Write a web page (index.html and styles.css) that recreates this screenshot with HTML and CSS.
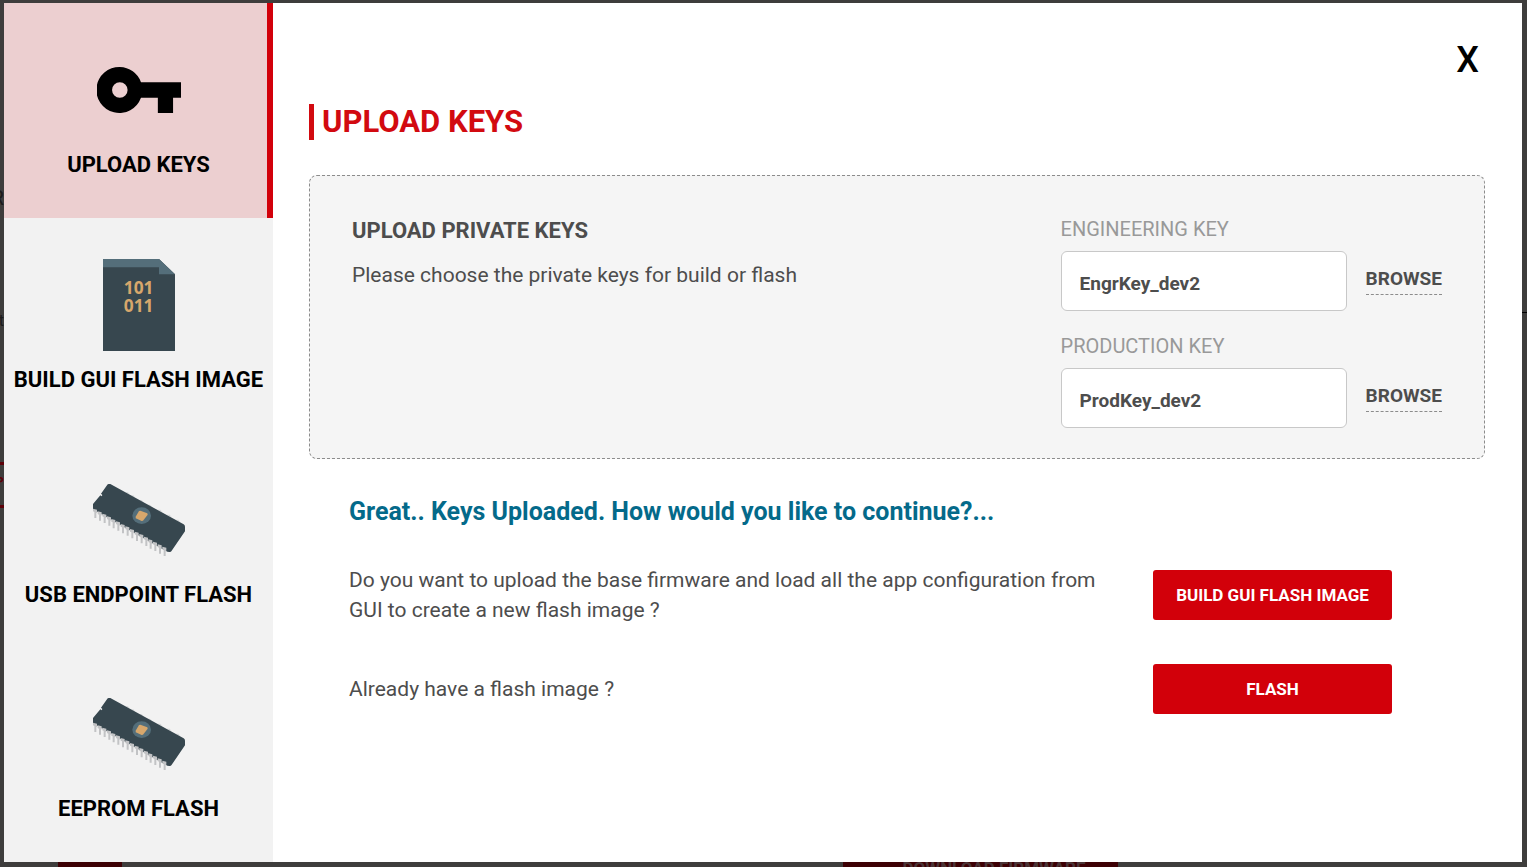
FILE: index.html
```
<!DOCTYPE html>
<html lang="en">
<head>
    <meta charset="UTF-8">
    <meta name="viewport" content="width=device-width, initial-scale=1">
    <title>Upload Keys</title>
    <link rel="stylesheet" href="styles.css">
</head>
<body>
    <!-- dimmed page behind the dialog, only its edges show -->
    <div class="backdrop" aria-hidden="true">
        <span class="bg-text bg-port">R</span>
        <span class="bg-text bg-not">not</span>
        <div class="bg-tab">P</div>
        <div class="bg-rule"></div>
        <div class="bg-icon"></div>
        <div class="bg-download">DOWNLOAD FIRMWARE</div>
    </div>

    <svg class="defs" width="0" height="0" aria-hidden="true">
        <symbol id="chip" viewBox="39 27 276 216">
            <path d="M136 52h8l5 6zM152 61h8l6 7zM176 75h9l6 7zM201 89h9l6 7zM232 104h9l7 8zM260 119h9l6 8zM286 134h9l6 8z" fill="#d5d7d8"/>
            <path d="M86 27h5l220 121q4 2 4 7v14l-41 60q-2 3-6 2l-6-1L39 103V87l22-26 4 3 2-4-4-4 19-27q1-2 4-2z" fill="#37474f"/>
            <g fill="#c2c3c5">
                <path id="pin" d="M39 101l12 3v9l-2 1v15h-6v-18l-4-2z"/>
                <use href="#pin" x="14" y="8"/>
                <use href="#pin" x="28" y="15"/>
                <use href="#pin" x="42" y="23"/>
                <use href="#pin" x="55" y="31"/>
                <use href="#pin" x="69" y="38"/>
                <use href="#pin" x="83" y="46"/>
                <use href="#pin" x="97" y="53"/>
                <use href="#pin" x="111" y="61"/>
                <use href="#pin" x="125" y="69"/>
                <use href="#pin" x="139" y="76"/>
                <use href="#pin" x="153" y="84"/>
                <use href="#pin" x="166" y="92"/>
                <use href="#pin" x="180" y="99"/>
                <use href="#pin" x="194" y="107"/>
                <use href="#pin" x="208" y="114"/>
            </g>
            <ellipse cx="185" cy="122" rx="28" ry="25" fill="#546e7a"/>
            <path d="M181 107l21 8 1 4-14 18-4 1-18-8v-5l10-17z" fill="#d7a76c"/>
        </symbol>
    </svg>

    <div class="dialog" role="dialog" aria-labelledby="dialog-title">
        <nav class="steps">
            <button type="button" class="step active">
                <span class="step-icon">
                    <svg width="84" height="46" viewBox="51 51 254 139">
                        <path fill-rule="evenodd" d="M120 51a69.500 69.500 0 0 1 64 46h121v47h-24v46h-46v-46h-51a69.500 69.500 0 1 1-64-93zM120 97a23.500 23.500 0 1 0 0 47a23.500 23.500 0 1 0 0-47z"/>
                    </svg>
                </span>
                <span>UPLOAD KEYS</span>
            </button>
            <button type="button" class="step">
                <span class="step-icon">
                    <svg width="72" height="92" viewBox="54 41 216 276">
                        <path d="M54 41h168l48 46v230H54z" fill="#37474f"/>
                        <path d="M54 41h168l48 46h-48V66H54z" fill="#546e7a"/>
                        <text class="binary" x="161" y="147">101</text>
                        <text class="binary" x="161" y="199">011</text>
                    </svg>
                </span>
                <span>BUILD GUI FLASH IMAGE</span>
            </button>
            <button type="button" class="step">
                <span class="step-icon">
                    <svg width="92" height="72"><use href="#chip"/></svg>
                </span>
                <span>USB ENDPOINT FLASH</span>
            </button>
            <button type="button" class="step">
                <span class="step-icon">
                    <svg width="92" height="72"><use href="#chip"/></svg>
                </span>
                <span>EEPROM FLASH</span>
            </button>
        </nav>

        <main class="content">
            <button type="button" class="close" aria-label="Close">X</button>
            <h1 class="title" id="dialog-title">UPLOAD KEYS</h1>

            <section class="keys-panel">
                <div class="keys-info">
                    <h2>UPLOAD PRIVATE KEYS</h2>
                    <p>Please choose the private keys for build or flash</p>
                </div>
                <div class="keys-form">
                    <div class="key-field">
                        <label for="engineering-key">ENGINEERING KEY</label>
                        <input type="text" id="engineering-key" value="EngrKey_dev2" readonly>
                        <button type="button" class="browse">BROWSE</button>
                    </div>
                    <div class="key-field">
                        <label for="production-key">PRODUCTION KEY</label>
                        <input type="text" id="production-key" value="ProdKey_dev2" readonly>
                        <button type="button" class="browse">BROWSE</button>
                    </div>
                </div>
            </section>

            <section class="next">
                <h3>Great.. Keys Uploaded. How would you like to continue?...</h3>
                <div class="next-row">
                    <p>Do you want to upload the base firmware and load all the app configuration from GUI to create a new flash image ?</p>
                    <button type="button" class="action">BUILD GUI FLASH IMAGE</button>
                </div>
                <div class="next-row">
                    <p>Already have a flash image ?</p>
                    <button type="button" class="action">FLASH</button>
                </div>
            </section>
        </main>
    </div>
</body>
</html>
```

FILE: styles.css
```
* {
    box-sizing: border-box;
}

body {
    margin: 0;
    min-height: 100vh;
    padding: 3px 5px 5px 4px;
    display: flex;
    position: relative;
    background-color: #3e3d3c;
    color: #4d4d4d;
    font-family: Roboto, "Liberation Sans", sans-serif;
    font-size: 21px;
    line-height: 30px;
}

h1, h2, h3, p {
    margin: 0;
}

button, input {
    font-family: inherit;
    margin: 0;
}

button {
    cursor: pointer;
}

.defs {
    position: absolute;
}

/* page behind */

.backdrop {
    position: absolute;
    inset: 0;
    overflow: hidden;
    color: #1c1b1b;
}

.bg-text {
    position: absolute;
    right: calc(100% - 4px);
}

.bg-port {
    top: 183px;
}

.bg-not {
    top: 306px;
    font-size: 16px;
}

.bg-tab {
    position: absolute;
    top: 462px;
    left: 0;
    width: 8px;
    height: 46px;
    border: solid #5c0008;
    border-width: 3px 0;
    color: #5c0008;
    font-size: 12px;
    font-weight: bold;
    line-height: 34px;
    text-indent: -4px;
}

.bg-rule {
    position: absolute;
    top: 312px;
    right: 0;
    width: 8px;
    height: 1px;
    background-color: #000;
}

.bg-icon, .bg-download {
    position: absolute;
    top: 855px;
    height: 36px;
    background-color: #3d0004;
}

.bg-icon {
    left: 58px;
    width: 64px;
}

.bg-download {
    left: 843px;
    width: 275px;
    padding-left: 27px;
    color: #4b3436;
    font-size: 17px;
    font-weight: bold;
    line-height: 26px;
    text-align: center;
}

/* dialog */

.dialog {
    flex: 1;
    display: flex;
    position: relative;
    background-color: #fff;
}

.steps {
    flex: none;
    width: 269px;
    display: grid;
    grid-template-rows: repeat(4, 1fr);
    background-color: #f2f2f2;
}

.step {
    display: flex;
    flex-direction: column;
    align-items: center;
    gap: 16px;
    padding: 41px 0 0;
    border: 0;
    background: none;
    color: #000;
    font-size: 22px;
    font-weight: bold;
    line-height: 25px;
    white-space: nowrap;
}

.step.active {
    background-color: #eccfd0;
    box-shadow: inset -6px 0 #d2000a;
}

.step-icon {
    display: flex;
    align-items: center;
    height: 92px;
}

.binary {
    fill: #d7a76c;
    font-family: "Open Sans", sans-serif;
    font-size: 52px;
    font-weight: bold;
    text-anchor: middle;
}

.content {
    flex: 1;
    display: flex;
    flex-direction: column;
    padding: 36px 37px 36px 36px;
}

.close {
    align-self: flex-end;
    padding: 0 6px;
    border: 0;
    background: none;
    color: #000;
    font-size: 36px;
    font-weight: 500;
    line-height: 42px;
}

.title {
    margin-top: 23px;
    padding-left: 8px;
    border-left: 5px solid #d20a10;
    color: #d20a10;
    font-size: 31px;
    line-height: 36px;
}

.keys-panel {
    display: flex;
    justify-content: space-between;
    margin-top: 35px;
    padding: 38px 42px 30px;
    border: 1px dashed #8c8c8c;
    border-radius: 8px;
    background-color: #f5f5f5;
}

.keys-info {
    padding-top: 2px;
}

.keys-info h2 {
    margin-bottom: 14px;
    font-size: 22px;
    line-height: 30px;
}

.keys-form {
    display: grid;
    gap: 20px;
}

.key-field {
    display: grid;
    grid-template-columns: 286px auto;
    column-gap: 19px;
    row-gap: 7px;
    align-items: center;
}

.key-field label {
    grid-column: 1 / -1;
    color: #999;
    font-size: 20px;
    line-height: 30px;
}

.key-field input {
    width: 100%;
    height: 60px;
    padding: 4px 18px 0;
    border: 1px solid #c8c8c8;
    border-radius: 6px;
    background-color: #fff;
    color: #4d4d4d;
    font-size: 19px;
    font-weight: bold;
}

.browse {
    padding: 0 0 3px;
    border: 0;
    border-bottom: 1px dashed #8c8c8c;
    background: none;
    color: #4d4d4d;
    font-size: 19px;
    font-weight: bold;
    line-height: 24px;
}

.next {
    padding: 38px 93px 0 40px;
}

.next h3 {
    margin-bottom: 38px;
    color: #046a8a;
    font-size: 25px;
}

.next-row {
    display: grid;
    grid-template-columns: 1fr 239px;
    column-gap: 36px;
    align-items: center;
    margin-bottom: 39px;
}

.action {
    height: 50px;
    border: 0;
    border-radius: 3px;
    background-color: #d2000a;
    color: #fff;
    font-size: 17px;
    font-weight: bold;
}
```
